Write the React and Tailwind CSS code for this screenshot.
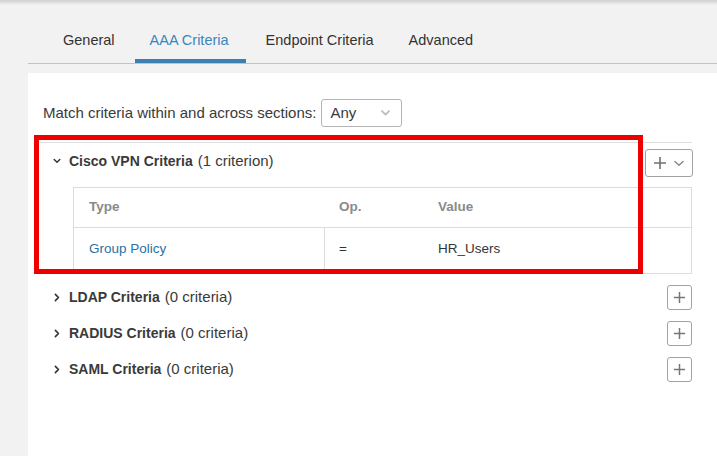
import { useState } from 'react';

const tabs = ['General', 'AAA Criteria', 'Endpoint Criteria', 'Advanced'];

function ChevronDown({ className = '', strokeWidth = '1.8' }) {
  return (
    <svg viewBox="0 0 10 6" className={className} fill="none" stroke="currentColor" strokeWidth={strokeWidth} strokeLinecap="round" strokeLinejoin="round">
      <path d="M1.5 1.2 5 4.6 8.5 1.2" />
    </svg>
  );
}

function ChevronRight({ className = '' }) {
  return (
    <svg viewBox="0 0 6 10" className={className} fill="none" stroke="currentColor" strokeWidth="1.8" strokeLinecap="round" strokeLinejoin="round">
      <path d="M1.2 1.5 4.6 5 1.2 8.5" />
    </svg>
  );
}

function Plus({ className = '' }) {
  return (
    <svg viewBox="0 0 14 14" className={className} fill="none" stroke="currentColor" strokeWidth="1.6">
      <path d="M7 1v12M1 7h12" />
    </svg>
  );
}

function CollapsedSection({ title, count }) {
  return (
    <div className="flex h-[36px] items-center justify-between">
      <div className="flex items-center text-[#3a3a3a]">
        <ChevronRight className="ml-[14px] mr-[9px] h-[9px] w-[6px] text-[#333]" />
        <span className="text-[14px] font-bold">{title}</span>
        <span className="ml-[5px] text-[15px]">({count})</span>
      </div>
      <button type="button" className="flex h-[25px] w-[25px] items-center justify-center rounded-[3px] border border-[#a2a2a2] bg-white text-[#777]">
        <Plus className="h-[13px] w-[13px]" />
      </button>
    </div>
  );
}

export default function App() {
  const [active, setActive] = useState(1);

  return (
    <div className="relative flex h-[456px] w-[717px] flex-col overflow-hidden bg-[#f2f2f2]" style={{ fontFamily: '"Liberation Sans", Arial, sans-serif' }}>
      <div className="absolute inset-x-0 top-0 h-[5px] bg-gradient-to-b from-[#cfcfcf] to-transparent" />

      <div className="ml-[28px] mt-[18px] flex border-b border-[#c2c2c2] pl-[20px]">
        {tabs.map((tab, i) => (
          <button
            key={tab}
            type="button"
            onClick={() => setActive(i)}
            className={[
              'mr-[5px] flex h-[45px] items-start border-b-[4px] px-[15px] pt-[12px] text-[14.5px]',
              i === active ? 'border-[#3b80b0] pr-[17px] text-[#3a86bd]' : 'border-transparent text-[#333]'
            ].join(' ')}
          >
            {tab}
          </button>
        ))}
      </div>

      <div className="ml-[28px] mt-[9px] flex-1 bg-white pl-[12px] pr-[25px]">
        <div className="flex items-center pl-[3px] pt-[26px] text-[15px] text-[#3a3a3a]">
          <span>Match criteria within and across sections:</span>
          <div className="ml-[5px] flex h-[28px] w-[81px] items-center justify-between rounded-[3px] border border-[#b4b4b4] pl-[8px] pr-[10px]">
            <span>Any</span>
            <ChevronDown className="h-[6px] w-[11px] text-[#bdbdbd]" />
          </div>
        </div>

        <div className="mt-[15px] border-t border-[#dedede]">
          <div className="flex h-[44px] items-center justify-between pb-[8px]">
            <div className="flex items-center text-[#3a3a3a]">
              <ChevronDown className="ml-[13px] mr-[8px] h-[6px] w-[8px] text-[#333]" />
              <span className="text-[14px] font-bold">Cisco VPN Criteria</span>
              <span className="ml-[5px] text-[15px]">(1 criterion)</span>
            </div>
            <button type="button" className="-mr-px mt-[4px] flex h-[28px] w-[48px] items-center justify-center gap-[6px] rounded-[3px] border border-[#a2a2a2] bg-white text-[#707070]">
              <Plus className="h-[14px] w-[14px]" />
              <ChevronDown className="h-[7px] w-[12px] text-[#888]" strokeWidth="1.2" />
            </button>
          </div>

          <div className="ml-[33px] border border-[#dcdcdc] text-[13.5px]">
            <div className="flex h-[40px] items-center border-b border-[#dcdcdc] font-bold text-[#8a8a8a]">
              <div className="w-[251px] pl-[15px]">Type</div>
              <div className="w-[98px] pl-[14px]">Op.</div>
              <div className="flex-1 pl-[15px]">Value</div>
            </div>
            <div className="flex h-[45px] items-stretch pb-[2px] text-[#333]">
              <div className="flex w-[251px] items-center border-r border-[#dcdcdc] pl-[15px] text-[#2a72a3]">Group Policy</div>
              <div className="flex w-[98px] items-center pl-[14px]">=</div>
              <div className="flex flex-1 items-center pl-[15px]">HR_Users</div>
            </div>
          </div>
        </div>

        <div className="mt-[5px]">
          <CollapsedSection title="LDAP Criteria" count="0 criteria" />
          <CollapsedSection title="RADIUS Criteria" count="0 criteria" />
          <CollapsedSection title="SAML Criteria" count="0 criteria" />
        </div>
      </div>

      <div className="pointer-events-none absolute left-[34px] top-[135px] h-[139px] w-[609px] border-[5px] border-[#ee0000]" />
    </div>
  );
}
